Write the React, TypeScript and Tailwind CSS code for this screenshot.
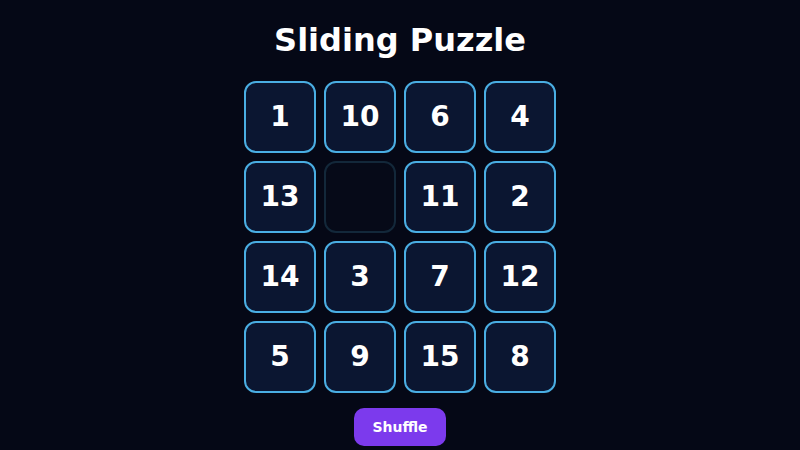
import React from "react";

const tiles: (number | null)[] = [1, 10, 6, 4, 13, null, 11, 2, 14, 3, 7, 12, 5, 9, 15, 8];

export default function App() {
  return (
    <div
      className="w-[800px] h-[450px] bg-[#050816] flex flex-col items-center text-white overflow-hidden"
      style={{ fontFamily: '"DejaVu Sans", sans-serif' }}
    >
      <h1 className="mt-[20px] h-[40px] leading-[40px] text-[32px] font-bold">Sliding Puzzle</h1>
      <div className="mt-[21px] grid grid-cols-[repeat(4,72px)] gap-2">
        {tiles.map((t, i) =>
          t === null ? (
            <div
              key={i}
              className="w-[72px] h-[72px] rounded-[12px] border-2 border-[#13283a] bg-[#060a18]"
            />
          ) : (
            <div
              key={i}
              className="w-[72px] h-[72px] rounded-[12px] border-2 border-[#4aaee3] bg-[#0b1631] flex items-center justify-center text-[28px] font-bold"
            >
              {t}
            </div>
          ),
        )}
      </div>
      <button className="mt-[15px] w-[92px] h-[38px] rounded-[10px] bg-[#7c3aed] text-[14px] font-bold text-white">
        Shuffle
      </button>
    </div>
  );
}
